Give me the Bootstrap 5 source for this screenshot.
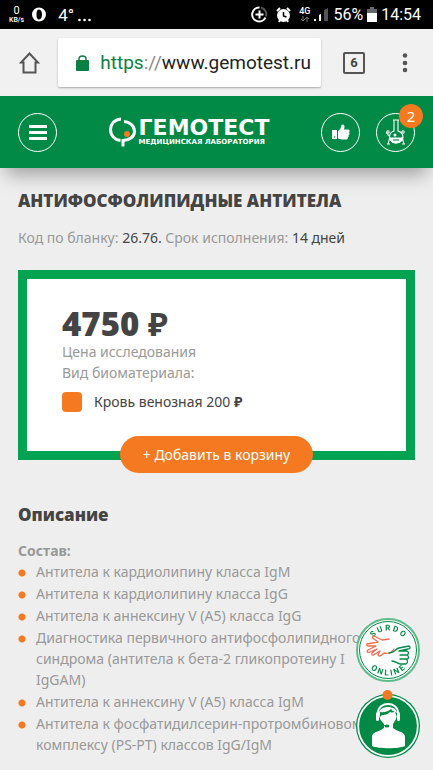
<!DOCTYPE html>
<html lang="ru">
<head>
<meta charset="utf-8">
<meta name="viewport" content="width=device-width, initial-scale=1">
<title>Антифосфолипидные антитела — Гемотест</title>
<link href="https://cdn.jsdelivr.net/npm/bootstrap@5.3.0/dist/css/bootstrap.min.css" rel="stylesheet">
<style>
  body { background: #eee; color: #999; font: 14px/21px "Noto Sans", "Open Sans", sans-serif; overflow: hidden; }
  svg { display: block; flex: none; }
  button { border: 0; background: none; padding: 0; }
  .status-bar { height: 29px; background: #000; color: #fff; font: 17px/28px Roboto, sans-serif; padding: 0 12px 0 9px; }
  .speed { font-size: 11px; line-height: 11px; text-align: center; }
  .speed small { display: block; font-size: 7px; line-height: 8px; font-weight: 500; }
  .net { font-size: 9px; line-height: 9px; font-weight: 500; text-align: center; }
  .stat { font-size: 16px; }
  .browser-bar { height: 67px; background: #f1f1f1; padding: 0 19px; }
  .address { height: 49px; background: #fff; border-radius: 2px; box-shadow: 0 1px 2px rgba(0,0,0,.3); margin: 0 22px 0 18px; padding: 0 10px 0 18px; min-width: 0; }
  .url { font: 19px/26px Roboto, sans-serif; color: #888; white-space: nowrap; }
  .url b { font-weight: 400; color: #0b8043; }
  .url span { color: #222; }
  .tabs-btn { width: 22px; height: 22px; border: 2px solid #555; border-radius: 2px; color: #444; font: 700 13px/18px Roboto, sans-serif; margin-right: 31px; }
  .site-head { height: 72px; background: #008a45; padding: 0 18px; box-shadow: 0 12px 18px -6px rgba(0,0,0,.35); }
  .round-btn { width: 39px; height: 39px; border: 1px solid #fff; border-radius: 50%; color: #fff; display: flex; align-items: center; justify-content: center; position: relative; }
  .count { position: absolute; left: 22px; top: -10px; width: 24px; height: 24px; border-radius: 50%; background: #f47920; font-size: 15px; line-height: 24px; }
  .logo { color: #fff; text-decoration: none; font-family: "DejaVu Sans", sans-serif; font-weight: 700; white-space: nowrap; gap: 3px; }
  .logo-name { font-size: 22px; line-height: 20px; }
  .logo-sub { font-size: 7px; line-height: 9px; }
  main { padding: 22px 18px 0; }
  h1, h2 { font: 800 17px/22px "Open Sans", sans-serif; color: #444; margin: 0 0 15px; }
  h2 { margin-bottom: 14px; }
  .dark { color: #444; }
  .price-box { background: #fff; border: 9px solid #00a351; margin: 22px 0 44px; padding: 28px 35px 0; }
  .price { font: 800 33px/34px "Open Sans", sans-serif; color: #444; }
  .price span { font-family: "Noto Sans", sans-serif; font-weight: 700; }
  .swatch { width: 20px; height: 20px; border-radius: 4px; background: #f47920; }
  .add-btn { background: #f47920; color: #fff; height: 37px; border-radius: 19px; padding: 0 23px; margin-bottom: -22px; }
  .parts { list-style: none; margin: 0; padding: 0; display: grid; gap: 1px; }
  .parts li { padding-left: 18px; background: radial-gradient(circle at 4px 12px, #f47920 3px, transparent 4px) no-repeat; }
  .floaters { position: fixed; right: 13px; bottom: 12px; }
</style>
<script src="https://cdn.jsdelivr.net/npm/bootstrap@5.3.0/dist/js/bootstrap.bundle.min.js"></script>
</head>
<body>
<div class="status-bar d-flex align-items-center">
  <div class="speed">0<small>KB/s</small></div>
  <svg class="ms-2" width="14" height="15" viewBox="0 0 14 15"><path fill="#fff" fill-rule="evenodd" d="M7 .5a7 7 0 1 1 0 14a7 7 0 1 1 0-14zM7 2.500C5 2.500 4.500 5 4.500 7.500S5 12.500 7 12.500S10 10 10 7.500S9 2.500 7 2.500z"/></svg>
  <span class="ms-2 ps-1">4°</span>
  <svg class="ms-1" width="13" height="22"><g fill="#fff"><circle cx="1.500" cy="16" r="1.300"/><circle cx="6.500" cy="16" r="1.300"/><circle cx="11.500" cy="16" r="1.300"/></g></svg>
  <svg class="ms-auto" width="17" height="17" viewBox="0 0 17 17" fill="none"><path d="M10 1.500A7 7 0 0 1 15 10.500" stroke="#555" stroke-width="2"/><path d="M8.500 1.500a7 7 0 1 0 6 10" stroke="#fff" stroke-width="2"/><path d="M8.500 4.500v8M4.500 8.500h8" stroke="#fff" stroke-width="2"/></svg>
  <svg class="ms-2" width="15" height="16" viewBox="0 0 15 16"><circle cx="7.500" cy="8.500" r="6.500" fill="#fff"/><path d="M1 4l3-3M14 4l-3-3M3 15l1-2M12 15l-1-2" stroke="#fff" stroke-width="2"/><path d="M7.500 5v4l3 1" stroke="#000" stroke-width="1.500" fill="none"/></svg>
  <div class="net ms-2">4G<svg class="mx-auto" width="8" height="6"><path d="M2 0v5M0 3l2 2 2-2M6 6V1M4 3l2-2 2 2" stroke="#777" fill="none"/></svg></div>
  <svg class="ms-1" width="15" height="15"><path d="M10 3l4-2v13h-4z" fill="#555"/><path d="M0 12h2v2H0zM5 8l2-1v7H5z" fill="#fff"/></svg>
  <span class="stat ms-1">56%</span>
  <svg class="ms-1" width="10" height="15"><path d="M3 0h4v2h3v6H0V2h3z" fill="#666"/><path d="M0 6h10v9H0z" fill="#fff"/></svg>
  <span class="stat ms-1">14:54</span>
</div>
<div class="browser-bar d-flex align-items-center">
  <button aria-label="Домой"><svg width="21" height="22" viewBox="0 0 21 22"><path d="M10.500 1.500L2 10.500h2.500V20.500h12V10.500H19z" fill="none" stroke="#555" stroke-width="2"/></svg></button>
  <div class="address d-flex align-items-center justify-content-between flex-grow-1">
    <svg width="13" height="16" viewBox="0 0 13 16"><rect y="5" width="13" height="11" rx="1" fill="#0b8043"/><path d="M3 6V4a3.500 3 0 0 1 7 0v2" fill="none" stroke="#0b8043" stroke-width="1.500"/></svg>
    <div class="url"><b>https</b>://<span>www.gemotest.ru</span></div>
  </div>
  <button class="tabs-btn" aria-label="Вкладки">6</button>
  <button aria-label="Меню браузера"><svg width="18" height="20" fill="#555"><circle cx="9" cy="2.500" r="2.300"/><circle cx="9" cy="10" r="2.300"/><circle cx="9" cy="17" r="2.300"/></svg></button>
</div>
<header class="site-head d-flex align-items-center">
  <button class="round-btn" aria-label="Меню"><svg width="18" height="15"><path d="M0 1.500h18M0 7.500h18M0 13.500h18" stroke="#fff" stroke-width="3"/></svg></button>
  <a class="logo d-flex align-items-center mx-auto" href="#">
    <svg width="27" height="30" viewBox="0 0 27 30" fill="none" stroke="#fff" stroke-width="3"><path d="M12 2C5 2.500 1.500 7.500 1.500 12.500C1.500 19 6 23 11.500 23.500"/><path d="M15 4.500C21 5 25.500 9 25.500 14.500C25.500 20 20 23.500 14 23.500V29.500"/><circle cx="18" cy="17" r="3" fill="#f47920" stroke="none"/></svg>
    <span><span class="logo-name d-block">ГЕМОТЕСТ</span><span class="logo-sub d-block">МЕДИЦИНСКАЯ ЛАБОРАТОРИЯ</span></span>
  </a>
  <button class="round-btn me-3" aria-label="Отзывы"><svg width="18" height="16" viewBox="0 0 18 16" fill="#fff"><path d="M0 6h5v9H0z"/><path d="M6 7C8 6 9 4 9.500 1C10 0 12.500 0 12.500 2.500C12.500 4 12 5 12 5.500H16C18 5.500 18 8 17 8.500C18 9.500 17.500 11 16.500 11C17 12 16.500 13 16 13.500C16 15 15 15.500 14 15.500H10C8 15.500 7.500 14.500 6 14.500z"/><circle cx="2.500" cy="13" r=".8" fill="#008a45"/></svg></button>
  <button class="round-btn" aria-label="Корзина"><svg width="20" height="27" viewBox="0 0 20 27" fill="none" stroke="#fff" stroke-width="1.100"><path d="M7 1h6M8 1v11C5 13 3.500 15 3.500 18C3.500 21 6 24 10 24S17 21 17 18C17 15 15 13 12 12V1"/><path d="M4 19h12.500C16 22 14 24 10 24S4.500 22 4 19z" fill="#fff"/><path d="M2 25l2-7M18 25l-2-7M1 25h3M16 25h3M0 13l3 4"/><circle cx="2" cy="13" r="1.200"/><circle cx="17" cy="13" r="1.200"/><circle cx="9" cy="16" r="1"/><path d="M7 21h6" stroke="#008a45"/></svg><span class="count">2</span></button>
</header>
<main>
  <h1>АНТИФОСФОЛИПИДНЫЕ АНТИТЕЛА</h1>
  <div>Код по бланку: <span class="dark">26.76.</span> Срок исполнения: <span class="dark">14 дней</span></div>
  <section class="price-box">
    <div class="price">4750 <span>₽</span></div>
    <div>Цена исследования</div>
    <div>Вид биоматериала:</div>
    <div class="d-flex align-items-center mt-2 dark"><span class="swatch me-2"></span><span class="ms-1">Кровь венозная 200 <b>₽</b></span></div>
    <div class="d-flex justify-content-center mt-4"><button class="add-btn">+ Добавить в корзину</button></div>
  </section>
  <section>
    <h2>Описание</h2>
    <div class="fw-bold">Состав:</div>
    <ul class="parts">
      <li>Антитела к кардиолипину класса IgM</li>
      <li>Антитела к кардиолипину класса IgG</li>
      <li>Антитела к аннексину V (А5) класса IgG</li>
      <li>Диагностика первичного антифосфолипидного синдрома (антитела к бета-2 гликопротеину I<br>IgGAM)</li>
      <li>Антитела к аннексину V (А5) класса IgM</li>
      <li>Антитела к фосфатидилсерин-протромбиновому комплексу (PS-PT) классов IgG/IgM</li>
    </ul>
  </section>
</main>
<div class="floaters d-grid gap-2">
  <button aria-label="Surdo online">
    <svg width="64" height="64" viewBox="0 0 64 64" fill="none">
      <circle cx="32" cy="32" r="31" fill="#fff" stroke="#5dbb87" stroke-width="2"/><circle cx="32" cy="32" r="28.500" stroke="#008a45"/>
      <path id="arcTop" d="M12.500 32a19.500 19.500 0 0 1 39 0"/><path id="arcBottom" d="M6.500 32a25.500 25.500 0 0 0 51 0"/>
      <g fill="#008a45" font-family="Roboto, sans-serif" font-weight="700" font-size="8" text-anchor="middle"><text><textPath href="#arcTop" startOffset="50%">S U R D O</textPath></text><text><textPath href="#arcBottom" startOffset="50%">O N L I N E</textPath></text></g>
      <g stroke-width="1.300" stroke-linecap="round" stroke-linejoin="round"><path stroke="#f26c4f" d="M33 21L26 22L18 18C16 18 16 20 18 21L22 24L11 26C10 28 12 28 13 28L20 28L12 32C10 34 12 35 14 34L21 31L16 35C15 37 17 38 19 36L24 33L22 37C23 39 25 38 28 35C32 36 36 34 38 31"/><path stroke="#008a45" d="M33 35C38 35 39 31 43 30L53 28C55 29 54 31 52 31L43 33M43 33H51C53 34 53 36 51 37H44M51 37C53 38 53 41 51 41H44M50 41C52 42 52 45 50 46H44C41 45 39 43 36 43"/></g>
    </svg>
  </button>
  <button aria-label="Консультант">
    <svg width="64" height="68" viewBox="0 0 64 68">
      <circle cx="32" cy="36" r="32" fill="#008a45"/><circle cx="32" cy="36" r="29.800" fill="none" stroke="#fff" stroke-width="1.800"/>
      <path fill="#fff" d="M16 56V47C16 43 20 42 25 40L28 38V34C25 31 23 28 23 24C23 19 27 17 32 17S41 19 41 24C41 28 39 31 37 34V38L40 40C45 42 49 43 49 47V56C43 59 22 59 16 56z"/>
      <path fill="#008a45" d="M24 27V22C28 23 33 21 35 19C37 22 40 22 41 23V27L39 22C35 23 34 22 34 22C31 25 28 25 26 25z"/>
      <path d="M22 27V23C22 11 42 11 42 23V27" fill="none" stroke="#fff" stroke-width="2"/><path d="M23 29C24 34 28 36 31 36" fill="none" stroke="#008a45"/><ellipse cx="31" cy="36" rx="2.500" ry="1.500" fill="#008a45"/><rect x="20" y="22" width="3" height="9" rx="1.500" fill="#fff"/><rect x="41" y="22" width="3" height="9" rx="1.500" fill="#fff"/>
      <circle cx="31.500" cy="5" r="5" fill="#f47920"/>
    </svg>
  </button>
</div>
</body>
</html>
